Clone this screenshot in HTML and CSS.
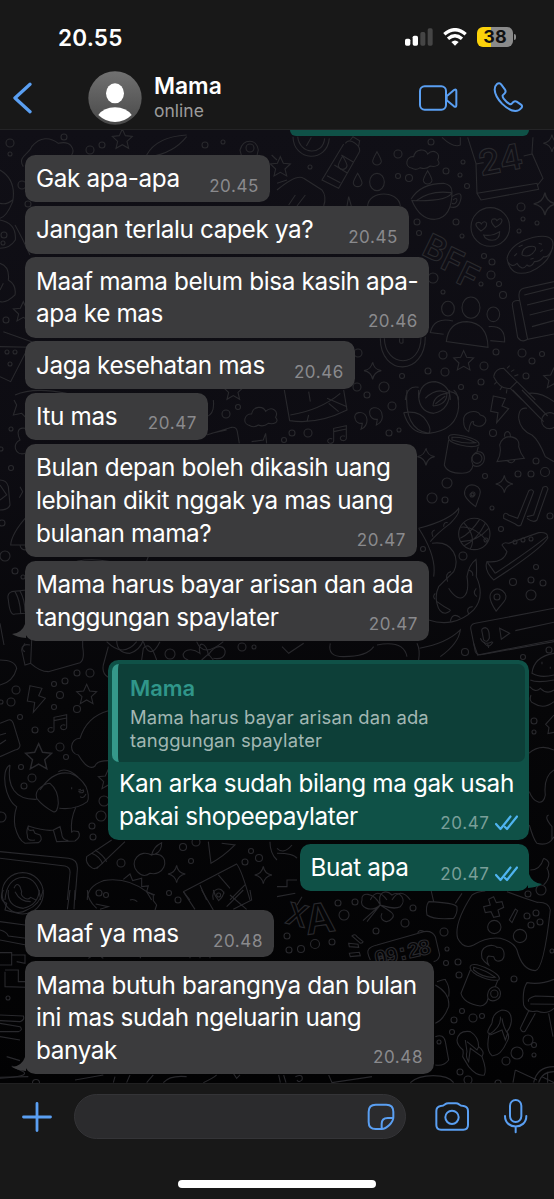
FILE: index.html
```
<!DOCTYPE html>
<html lang="id">
<head>
  <meta charset="UTF-8">
  <title>Mama</title>
  <link rel="stylesheet" href="styles.css">
</head>
<body>

<!-- status bar + header -->
<header class="header">
  <div class="status">
    <span class="clock">20.55</span>
    <div class="status-icons">
      <svg class="signal" width="28" height="18" viewBox="384 83 84 54">
        <rect x="384" y="115" width="16" height="21" rx="5" fill="#fff"/>
        <rect x="407" y="106" width="16" height="30" rx="5" fill="#fff"/>
        <rect x="430" y="95" width="15" height="41" rx="5" fill="#454545"/>
        <rect x="452" y="84" width="15" height="52" rx="5" fill="#454545"/>
      </svg>
      <svg class="wifi" width="24" height="18" viewBox="499 83 72 54">
        <path d="M503 102Q535 74 567 102" fill="none" stroke="#fff" stroke-width="10"/>
        <path d="M514 115Q535 97 556 115" fill="none" stroke="#fff" stroke-width="10"/>
        <path d="M524 125Q535 116 546 125L535 136Z" fill="#fff"/>
      </svg>
      <div class="battery"><span>38</span></div>
    </div>
  </div>
  <div class="contact">
    <svg class="back" width="19" height="32" viewBox="37 245 58 96">
      <path d="M89 251L43 293L89 335" fill="none" stroke="#5a9ff2" stroke-width="10" stroke-linecap="round" stroke-linejoin="round"/>
    </svg>
    <svg class="avatar" width="54" height="54" viewBox="265 211 162 162">
      <defs>
        <linearGradient id="av" x1="0" y1="0" x2="0" y2="1">
          <stop offset="0" stop-color="#717171"/>
          <stop offset="1" stop-color="#494949"/>
        </linearGradient>
      </defs>
      <circle cx="346" cy="292" r="80" fill="url(#av)"/>
      <ellipse cx="346" cy="278" rx="27" ry="30" fill="#fff"/>
      <path d="M296 343Q313 320 346 320Q379 320 396 343Q374 364 346 364Q318 364 296 343Z" fill="#fff"/>
    </svg>
    <div class="who">
      <div class="name">Mama</div>
      <div class="presence">online</div>
    </div>
    <svg class="video" width="39" height="26" viewBox="428 251 117 78" fill="none" stroke="#5a9ff2" stroke-width="6" stroke-linejoin="round">
      <rect x="431" y="255" width="78" height="70" rx="14"/>
      <path d="M511 285L533 266Q540 262 540 269V312Q540 319 533 315L511 297Z"/>
    </svg>
    <svg class="phone" width="31" height="31" viewBox="652 247 93 93" fill="none" stroke="#5a9ff2" stroke-width="6" stroke-linejoin="round">
      <path d="M664 253Q671 247 677 255L688 270Q692 276 687 281L681 287Q680 291 684 297Q692 308 702 313Q706 315 709 311L713 307Q718 303 723 306L736 315Q742 319 737 325Q730 334 719 334Q700 333 679 312Q658 290 657 270Q657 259 664 253Z"/>
    </svg>
  </div>
</header>

<main class="chat">
  <!-- doodle wallpaper -->
  <svg class="wallpaper" viewBox="0 130 554 953">
    <defs>
      <path id="star" d="M0-30L9-10L30-8L14 7L19 28L0 17L-19 28L-14 7L-30-8L-9-10Z"/>
      <path id="spark" d="M0-26Q3-4 26 0Q4 4 0 26Q-4 4-26 0Q-4-4 0-26Z"/>
      <path id="drop" d="M0-20Q14 4 13 10Q10 20 0 20Q-10 20-13 10Q-14 4 0-20Z"/>
      <path id="bolt" d="M-18-38L18-30L8-8L28 0L-8 42L-4 12L-26 8Z"/>
      <path id="cloud" d="M-35 25C-60 20-52-12-30-10C-25-35 5-35 12-18C30-35 52-20 42 0C55 15 35 22 20 18Q5 30-10 23Q-22 32-35 25Z"/>
      <path id="pin" d="M8 38Q-30 10-25-8Q-18-32 5-26Q28-18 20 4Q14 20 8 38Z"/>
      <path id="note" d="M-16 18V-20L22-28V10M-16-10L22-18M-16 18A9 7 0 1 1-20 12M22 10A9 7 0 1 1 18 4"/>
    </defs>

    <g transform="translate(0 140) scale(.3333)">
      <path d="M70 80C50 50 90 40 95 20C120-10 150-10 175 10C215 0 225 30 215 45M440 45Q470-10 560-15M450 50Q520 40 560-10M0 90Q50 120 38 185Q20 230 0 235M0 190Q20 195 38 180M0 240Q50 250 46 300Q30 325 0 325M45 255Q65 290 90 345M0 370Q30 380 25 420Q50 435 45 465Q20 490 0 485M10 430L0 450"/>
      <path d="M10 575L95 605M0 620L90 622M78 635L32 725L0 710M45 765Q100 740 200 760M720 30C730-5 770-5 775 30Q770 60 752 90Q725 60 720 30M815 45L831 60"/>
      <use href="#star" x="367" y="-3"/><use href="#star" x="70" y="515"/><use href="#star" x="700" y="750"/>
    </g>

    <g transform="translate(277 130) scale(.3333)">
      <path d="M48 20C50 95 150 100 157 25M62 20C68 75 138 78 143 25M103 22L88 48"/>
      <path d="M205 40Q215 25 235 40Q255 55 245 70L185 175L135 150L200 42M193 75L230 97M172 105L212 130M150 137L190 158M220 30L228 20L248 32L245 48"/>
      <path d="M572 22L597 100L600 190L612 210L785 178L780 160L600 190M768 22L765 70L798 145L782 165M597 102L620 98M740 78L765 72"/>
      <path d="M402 208Q430 160 500 160Q525 165 525 185Q520 215 405 212Q430 270 475 268Q525 262 525 185M525 200Q555 180 552 205Q545 240 518 230M418 212Q460 180 522 188M528 210Q540 200 540 212Q535 225 525 220"/>
      <circle cx="640" cy="291" r="58"/>
      <path d="M612 303Q590 285 600 278Q610 275 613 282Q622 270 629 280Q630 293 612 303ZM655 292Q638 275 646 268Q656 264 660 272Q670 262 675 270Q676 282 655 292ZM620 315Q645 320 668 305Q668 330 645 331Q625 330 620 315Z"/>
      <path d="M690 385Q700 340 770 322Q830 310 828 345Q820 400 760 425Q700 445 690 385M692 395Q705 415 720 400Q735 425 750 405Q762 415 772 395Q790 395 800 380Q815 385 828 352M735 375Q735 355 755 350Q780 345 775 360Q760 385 735 375M720 370l-8 8M725 350l12-5M785 340l10 3M790 365l8-6M760 388l10-3"/>
      <path d="M831 455L740 475Q722 480 727 505L752 628L831 612M727 512Q705 510 706 525L722 622Q735 640 752 628M742 495L831 473M750 525L831 505M758 555L831 537M765 590L831 572"/>
      <ellipse cx="513" cy="536" rx="19" ry="22"/><ellipse cx="582" cy="533" rx="27" ry="32"/><ellipse cx="649" cy="553" rx="19" ry="22"/>
      <path d="M508 635Q515 575 570 575Q632 580 633 652ZM528 573Q470 560 460 608L500 613M635 590Q685 585 683 636L640 632"/>
      <path d="M310 625C310 740 445 740 445 620M322 625C325 715 432 715 432 622M368 625Q365 645 378 638V625"/>
      <path d="M0 180Q60 130 80 145L135 180Q150 200 140 228M0 160L30 150M35 225L55 195M60 228L85 195M272 228C275 180 365 180 370 228M210 228L215 200L223 228M495 22Q530 55 550 45V22"/>
      <path d="M650 740Q655 715 680 715L720 755L700 775Q670 780 650 740M720 755L775 810M700 775L735 810M660 755l-8 8M675 770l-6 10M690 778l-2 12M690 715l8-8M702 725l10-6M712 738l12-4"/>
      <path d="M385 810Q390 765 425 772M425 805Q430 755 475 755Q520 765 520 810M520 785Q545 790 545 810M445 805Q480 770 515 790"/>
      <use href="#star" x="10" y="110"/><use href="#star" x="560" y="692"/><use href="#star" x="830" y="745"/>
      <use href="#spark" x="803" y="222" transform="translate(-240 -67) scale(1.3)"/><use href="#spark" x="287" y="722"/><use href="#spark" x="825" y="40"/>
      <use href="#drop" x="300" y="85"/><use href="#drop" x="242" y="150"/><use href="#drop" x="452" y="142" /><use href="#drop" x="197" y="98"/>
      <ellipse cx="300" cy="156" rx="22" ry="26"/>
      <use href="#cloud" x="440" y="90"/>
      <g class="letters">
        <text x="612" y="138" font-size="105" transform="rotate(-11 612 138)">24</text>
        <text x="430" y="372" font-size="100" transform="rotate(26 430 372)">B</text>
        <text x="485" y="412" font-size="100" transform="rotate(26 485 412)">F</text>
        <text x="532" y="455" font-size="100" transform="rotate(26 532 455)">F</text>
      </g>
    </g>

    <g transform="translate(277 390) scale(.3333)">
      <path d="M22 0L38 92Q120 105 210 60L200 0M40 75Q130 60 190 10M95 5l5 30M95 75l-5 20M155 40L185 65M150 25L210 50"/>
      <path d="M235 88C225 65 260 60 268 80C275 100 262 115 252 118Q255 108 256 100Q240 102 235 88M279 75C270 50 305 45 314 68C320 88 310 100 298 105Q300 95 301 88Q285 90 279 75"/>
      <path d="M390 0Q380 120 455 130Q540 120 545 50Q545 10 530 0M380 68Q430 60 450 95Q465 120 455 130Q400 135 380 68M425 0Q420 65 470 70Q520 60 518 0M468 48Q470 15 510 10Q510 45 468 48M475 42L505 18"/>
      <path d="M560 95C555 65 600 55 610 75C640 80 625 115 600 108Q585 105 590 95Q580 90 575 125Q560 115 560 95"/>
      <path d="M707 0L800 95M735 0L812 78M725 85Q725 50 750 55M725 85Q730 120 765 135Q785 150 805 200L831 215M755 10Q790 5 831 35"/><circle cx="818" cy="92" r="24"/>
      <path d="M660 215Q675 190 668 165Q675 140 700 140Q730 145 725 170Q730 190 742 205ZM683 140C680 120 702 120 700 140M692 213Q705 225 714 210"/>
      <path d="M515 140Q520 128 560 138Q610 150 606 165Q590 175 550 165Q510 155 515 140M515 150L502 225Q510 250 555 250Q585 250 588 225M604 170L600 185M588 225C570 190 615 170 622 200C625 225 600 235 588 225"/><circle cx="600" cy="205" r="15"/>
      <path d="M525 142Q560 140 596 158Q560 162 525 150Z"/>
      <path d="M680 375Q685 365 695 375L722 385L755 303Q765 295 770 305L732 405Q725 412 715 402L680 385ZM750 380L770 375L798 292Q810 285 813 297L780 390Q770 400 750 385"/>
      <circle cx="592" cy="432" r="47"/>
      <path d="M550 412Q590 405 632 455M560 398Q600 440 580 477M608 388Q580 430 550 445M625 400Q600 450 560 468M552 455Q600 455 635 415"/>
      <path d="M675 465Q680 455 695 460L785 428Q815 425 812 445Q790 480 650 570Q620 540 630 515Q680 520 690 485ZM632 518L655 550M655 550Q760 480 810 440"/>
      <path d="M425 415Q520 390 545 355Q550 370 520 400Q480 430 460 455M425 415Q480 500 470 560M465 460C530 450 550 510 530 545Q505 570 485 590C470 620 480 670 505 670Q520 665 520 660M515 595C550 650 580 620 570 560Q575 525 597 508Q600 530 598 560Q625 620 590 660C550 700 500 705 455 690M480 635Q500 650 520 660"/>
      <path d="M468 440q-8-15 5-20M500 410q0-15 12-12M512 575q-10-25 10-30M575 540q15 5 12 18M600 620q-15-10-2-25M575 672q-10-20 12-22M520 695q5-30 30-12M475 610q-10 10 0 18"/>
      <path d="M831 655L595 700Q578 703 582 720L595 785Q600 797 620 793L831 755M668 715L698 730L673 748ZM715 722L831 697M615 725Q612 715 625 713Q638 715 637 745Q630 760 620 750ZM610 745Q620 768 645 755M632 762l3 12"/>
      <path d="M428 775Q510 760 550 720Q545 760 490 800M420 760Q430 780 425 810M160 760Q150 800 200 800Q270 800 290 770M300 765Q380 750 390 800M15 770L35 790L80 760"/>
      <use href="#bolt" x="667" y="56"/><use href="#note" x="186" y="135"/>
      <use href="#spark" x="447" y="200"/><use href="#spark" x="682" y="282"/>
      <use href="#pin" x="588" y="312" /><use href="#pin" x="663" y="625" transform="rotate(20 663 625)"/>
    </g>

    <g transform="translate(0 400) scale(.3333)">
      <path d="M42 0L50 15L40 45L65 40L80 55M75 85C45 80 55 110 60 120C35 130 45 170 75 160M0 240Q20 240 25 260L30 315Q25 330 0 330M0 255L20 285L0 300M60 260l8 15l-10 18M80 350Q35 400 32 435Q50 435 78 435M60 437q5 15 18 12M80 570L35 575Q20 580 25 600Q30 650 45 642L80 640M45 575Q60 600 62 640M60 573Q75 600 75 635M0 670L12 735"/>
      <path d="M640 0Q645 40 620 50M620 105L695 82Q710 80 712 95L718 130M635 100L680 90M755 125L790 120L797 100L800 130M200 495Q250 470 330 485M440 483L445 470M75 730q-15 20 0 25M320 725q50 50 90 0M430 725q20 60 50 0M590 725q20 50 80 0"/>
      <use href="#cloud" x="785" y="52"/>
    </g>

    <g transform="translate(0 640) scale(.3333)">
      <path d="M95 0L92 70Q120 95 145 95L240 68Q255 60 248 20V0M90 15Q65 10 65 30L75 75L92 70M0 60Q45 60 50 85Q40 125 0 135M325 20L310 75Q305 100 325 112M425 60L430 25Q450 0 470 60M350 0Q350 40 390 40Q420 30 430 0"/>
      <path d="M565 60C530 50 560 10 600 40C590 0 620 5 625 45C650 5 680 20 675 40Q670 60 640 55M605 60L625 42L640 60"/>
      <path d="M0 250L25 240Q35 237 40 250L60 315Q60 328 45 330L0 350M0 285L18 280M0 312L18 300"/>
      <path d="M325 212Q260 230 240 295C210 295 205 340 235 345Q265 395 285 378Q290 362 325 362"/>
      <path d="M30 375C0 390 15 480 50 500Q40 530 45 560Q55 600 75 610L115 608Q130 600 120 585L105 580L100 570Q80 575 85 558Q140 575 160 570L170 605L225 603Q245 590 235 575Q215 570 215 578Q210 540 228 500M30 375C20 440 45 480 110 478M110 475C100 445 140 430 150 430Q175 450 175 490Q172 520 160 515Q130 500 110 475M120 450Q160 390 210 400Q240 410 258 440Q270 470 262 485Q230 510 178 505M175 395Q200 380 235 412M85 558Q78 575 82 585Q80 605 105 600M160 570L180 560L185 580Q185 600 205 602"/>
      <path d="M235 455l15-5q5 10-12 8M240 470q10 8 18-8M235 450l8-2M215 442v6"/>
      <path d="M0 635L205 655Q235 658 232 690L225 780M0 655L195 678Q212 682 210 700L202 780"/>
      <circle cx="68" cy="760" r="62"/><path d="M15 780Q20 715 70 712Q115 715 122 780M42 745Q50 725 60 740L65 755Q60 765 75 775Q85 780 92 772L108 780"/>
      <path d="M260 650L335 600M290 686L375 605M260 650Q255 670 275 683Q285 690 295 680M275 640Q300 650 308 672M285 630Q310 645 320 665"/>
      <path d="M455 645C420 625 385 665 412 695Q430 715 450 700C490 710 510 660 480 645Q465 640 455 645Q460 620 485 608Q485 635 465 642"/>
      <path d="M262 780Q260 740 310 722Q380 710 440 755L455 780M370 718L390 702L398 722L425 715V740L445 738L440 755L465 765"/>
      <path d="M625 605L633 670Q670 650 705 615L665 610M550 755L710 672Q725 690 750 780M550 755L570 780M600 735L620 780M655 705L690 745M735 735L690 780M810 605Q810 640 831 660"/>
      <path d="M640 780C630 740 670 740 672 762"/><circle cx="656" cy="765" r="6"/>
      <use href="#bolt" x="108" y="175"/><use href="#star" x="260" y="163"/><use href="#star" x="116" y="350" transform="translate(-35 -105) scale(1.3)"/>
      <use href="#note" x="178" y="252"/><use href="#star" x="325" y="418"/>
      <use href="#spark" x="530" y="702"/><use href="#spark" x="790" y="705"/>
    </g>

    <g transform="translate(277 640) scale(.3333)">
      <path d="M590 10L602 45L831 0M620 5q15 25 28 0"/>
      <path d="M831 40Q770 50 765 100Q790 115 831 105M760 120Q780 130 831 120M758 140Q775 160 790 145Q810 165 831 150M762 165Q755 185 770 190Q800 210 831 185M795 65v8M820 80v6"/>
      <path d="M755 340Q790 310 831 330M757 455C770 490 800 500 805 465C800 420 815 400 831 390M815 525Q800 530 825 560V600M757 555Q770 600 780 610Q815 620 831 590M800 655Q790 690 760 690M800 655Q825 665 810 685Q825 710 800 735M831 225l-25 28l10 10l-3 18l18-4"/>
      <path d="M0 640Q50 640 60 655M0 625q20 20 45-10M0 740h30v-20h30M280 780Q300 740 330 780M345 780Q370 740 400 780"/>
    </g>

    <g transform="translate(0 890) scale(.3333)">
      <path d="M10 0Q-5 30 20 40L15 60Q60 75 80 60Q120 45 130 0M25 0Q20 50 70 55Q115 45 118 0M45 5Q60 35 92 35M210 0L202 58M225 0L222 58"/>
      <path d="M0 95L75 105M0 120Q20 125 25 138L78 145M0 150L78 165M0 188H35V225H0M35 195H75V220L50 215M15 245V290L75 292M15 240H55V275H75M0 375L70 378Q75 390 60 395L0 392M0 400L60 410Q70 420 55 425L0 425M0 440L60 450M20 500L60 512M35 528L70 545Q90 560 0 565"/>
      <path d="M262 0Q262 30 290 55M287 42L325 50L300 58M390 30Q400 25 412 35M440 5L460 15V32L470 45L465 60M550 5L585 58M605 0L640 60M750 0L755 30L700 58M640 0Q645 20 656 32Q670 20 672 5M690 15L740 58M680 50L730 0"/>
      <path d="M265 205q25-20 45 0M420 205l5-10M570 205v-20M600 205v-20M630 205v-20"/>
      <path d="M0 562L85 560M225 570L310 555M340 578L345 560M380 578L390 555M440 578L460 555M490 578Q510 555 560 560M610 578Q640 565 650 555M700 550l10 15l10-10"/>
    </g>

    <g transform="translate(277 890) scale(.3333)">
      <path d="M0 20L55 10M60 45L75 20"/>
      <path d="M310 45C280 70 245 50 255 30C250 5 290 5 310 45C300 0 330 0 345 15C370 0 390 30 370 50C350 60 330 50 310 45C330 60 360 70 345 85C330 105 305 90 315 70M310 45L258 92M310 45L270 95"/>
      <path d="M455 35Q445 50 450 75Q470 90 530 85Q542 70 540 50Q530 38 455 35M462 0L470 35M555 10L535 40"/>
      <path d="M585 15Q600 5 625 3M585 15Q530 100 542 145Q560 180 590 165Q630 140 670 145Q710 155 720 180Q735 240 775 242Q800 240 820 60Q815 35 780 37Q730 20 690 5M635 28L650 20L658 38L675 35L680 52L663 60L668 78L650 82L642 65L625 68L620 50L640 45Z"/>
      <path d="M697 90L715 57L722 62L705 98Z"/><circle cx="652" cy="111" r="20"/><circle cx="729" cy="138" r="20"/>
      <path d="M225 138Q235 130 240 140L258 155Q255 162 248 158ZM215 160L243 163L245 172L217 170ZM217 190L247 187L250 197L220 200Z"/>
      <path d="M280 210Q268 185 275 178Q280 170 300 165L440 125Q465 120 475 140L488 195Q485 212 470 215M422 130Q425 118 440 124"/>
      <path d="M615 205C605 165 650 160 660 172C685 170 685 200 675 210Q655 220 650 200L635 198Q625 205 635 225Q620 215 615 205"/>
      <path d="M580 228Q590 215 640 240Q675 260 665 270Q640 275 600 255Q575 240 580 228M580 240L552 310Q560 340 610 348Q630 345 633 325M662 272L655 290M633 325C625 295 660 275 670 305C675 330 645 340 633 325M590 232Q625 240 655 262Q620 265 590 240Z"/><circle cx="652" cy="311" r="11"/>
      <path d="M831 268Q790 285 750 278Q735 300 740 345Q750 370 780 363Q810 375 831 355M755 335Q750 325 775 318L831 320M760 342L831 343M755 363L730 415Q735 430 745 423L775 370M815 370L828 440"/>
      <path d="M540 450Q545 420 580 425Q605 440 605 470Q625 485 615 500Q630 540 622 555Q600 560 575 530L557 500Q560 490 558 480Q540 465 540 450M565 450L570 485Q565 500 575 515L580 475L615 500M570 455L600 480L605 470"/>
      <path d="M645 400Q645 370 675 360Q705 360 703 395Q700 415 690 425Q700 440 690 455Q670 500 645 497Q625 480 637 430Q625 430 645 400M670 380Q675 410 635 435M675 385Q680 415 692 430L685 450L675 420L640 435"/>
      <path d="M475 285Q520 310 515 350Q500 390 475 400M480 275Q510 265 505 270Q520 290 515 320M475 440Q500 430 505 455L515 510Q500 530 475 525M400 578C430 550 510 550 530 578M715 540L780 570M715 540L708 578M770 578Q780 530 831 530M785 578Q795 545 831 545M812 545V578M795 560L831 578M5 555L10 578M20 555L27 578M55 560q25-10 20 10q-10 10-15 0M155 555L165 578L285 560"/>
      <g class="letters">
        <text x="22" y="98" font-size="90" transform="rotate(14 22 98)">X</text>
        <text x="90" y="134" font-size="122" transform="rotate(-8 90 134)">A</text>
        <text class="digits" x="297" y="228" font-size="66" transform="rotate(-13 297 228)">09:28</text>
      </g>
    </g>

    <g id="dots"></g>
  </svg>

  <div class="peek"></div>

  <div class="msg in w245 first"><p>Gak apa-apa</p><time>20.45</time></div>
  <div class="msg in w384"><p>Jangan terlalu capek ya?</p><time>20.45</time></div>
  <div class="msg in w404"><p>Maaf mama belum bisa kasih apa-<br>apa ke mas</p><time>20.46</time></div>
  <div class="msg in w330"><p>Jaga kesehatan mas</p><time>20.46</time></div>
  <div class="msg in w183"><p>Itu mas</p><time>20.47</time></div>
  <div class="msg in w392"><p>Bulan depan boleh dikasih uang<br>lebihan dikit nggak ya mas uang<br>bulanan mama?</p><time>20.47</time></div>
  <div class="msg in w404 last"><p>Mama harus bayar arisan dan ada<br>tanggungan spaylater</p><time>20.47</time>
    <svg class="tail" width="26" height="24" viewBox="0 0 26 24"><path d="M13 0V6Q10 15 0 16Q6 20 16 20L26 24V0Z"/></svg>
  </div>

  <div class="msg out w420">
    <blockquote class="quote">
      <strong>Mama</strong>
      <span>Mama harus bayar arisan dan ada<br>tanggungan spaylater</span>
    </blockquote>
    <p>Kan arka sudah bilang ma gak usah<br>pakai shopeepaylater</p>
    <time>20.47 <svg class="ticks" width="23" height="16" viewBox="0 0 23 16"><path d="M1 9L5.5 14L15.5 1.5M10 12L12 14L22 1.5"/></svg></time>
  </div>
  <div class="msg out w229 last"><p>Buat apa</p>
    <time>20.47 <svg class="ticks" width="23" height="16" viewBox="0 0 23 16"><path d="M1 9L5.5 14L15.5 1.5M10 12L12 14L22 1.5"/></svg></time>
    <svg class="tail" width="26" height="24" viewBox="0 0 26 24"><path d="M13 0V6Q10 15 0 16Q6 20 16 20L26 24V0Z"/></svg>
  </div>

  <div class="msg in w249"><p>Maaf ya mas</p><time>20.48</time></div>
  <div class="msg in w409 last"><p>Mama butuh barangnya dan bulan<br>ini mas sudah ngeluarin uang<br>banyak</p><time>20.48</time>
    <svg class="tail" width="26" height="24" viewBox="0 0 26 24"><path d="M13 0V6Q10 15 0 16Q6 20 16 20L26 24V0Z"/></svg>
  </div>
</main>

<footer class="footer">
  <div class="composer">
    <svg class="plus" width="30" height="30" viewBox="0 0 30 30" fill="none" stroke="#5a9ff2" stroke-width="2.8" stroke-linecap="round">
      <path d="M15 1.5V28.5M1.5 15H28.5"/>
    </svg>
    <div class="field">
      <svg width="28" height="28" viewBox="271 82 84 84" fill="none" stroke="#5a9ff2" stroke-width="6" stroke-linejoin="round">
        <path d="M350 125V108Q350 87 329 87H297Q276 87 276 108V139Q276 160 297 160H315C330 160 350 140 350 125ZM315 160V145Q315 127 333 127H350"/>
      </svg>
    </div>
    <svg class="camera" width="34" height="30" viewBox="474 78 102 90" fill="none" stroke="#5a9ff2" stroke-width="6" stroke-linejoin="round">
      <path d="M478 105Q478 92 491 90Q499 90 504 85Q508 82 514 82H537Q542 82 546 85Q551 90 560 90Q573 92 573 105V147Q573 161 559 161H492Q478 161 478 147Z"/>
      <circle cx="525" cy="124" r="20"/>
    </svg>
    <svg class="mic" width="25" height="35" viewBox="678 72 75 105" fill="none" stroke="#5a9ff2" stroke-width="6" stroke-linecap="round">
      <rect x="699" y="75" width="34" height="66" rx="17"/>
      <path d="M684 123C684 165 748 165 748 123M716 155V172"/>
    </svg>
  </div>
  <div class="home-bar"></div>
</footer>

<script>
  // small circles scattered between the doodles: [x, y, r]
  const dots = [
    [10,143,4],[64,137,3],[90,150,4],[102,145,3],[205,145,3],[223,142,2],[10,154,2],[28,204,3],[22,185,4],[6,320,3],[250,148,4],[4,235,3],[3,243,2],[7,352,2],[15,352,2],[10,364,2],
    [310,167,2],[398,154,4],[431,142,3],[398,176,2.5],[409,178,3.5],[446,171,3],[463,162,2],[460,175,2],[467,186,2.5],[521,207,4],[523,219,2],[537,223,2],[519,231,2],
    [417,222,3],[419,233,2.5],[456,222,3],[462,236,2],[484,256,2.5],[492,262,3],[491,275,4],[481,284,2],[499,284,2.5],[433,278,5],[443,292,2],[503,295,3.5],[443,355,4],
    [496,352,3],[484,366,4],[522,353,4],[532,361,3],[542,354,2.5],[526,376,3],[428,371,3],[445,372,4],[402,376,2.5],[481,382,3],[461,387,2.5],[358,353,4],[357,387,4],[367,395,3],[384,387,5],[475,397,2.5],
    [292,433,3],[308,433,4],[284,440,2.5],[392,406,4],[389,433,3],[399,430,2],[493,433,3.5],[536,461,3],[518,474,3],[531,474,3],[545,472,4.5],[485,476,2.5],[447,483,5],[432,498,5],[445,500,3],
    [492,508,2],[501,529,2.5],[463,556,4],[550,516,3],[536,567,2.5],[531,580,3],[543,583,3],[513,582,3.5],[531,595,5],[465,652,3.5],[523,657,2.5],[423,549,2.5],[473,494,2],[497,597,3],
    [11,429,2],[1,449,2],[11,468,2.5],[5,556,5],[2,523,3],[15,571,3],[23,577,2],[226,414,4],[238,407,2.5],
    [170,654,5],[242,647,4],[254,647,2],[77,673,3],[90,673,4],[65,681,3],[54,684,2.5],[60,695,3.5],[16,690,4],[11,702,4],[1,702,2],[54,707,2.5],[77,709,3.5],[20,717,2.5],[35,730,3],[60,747,4],[66,757,2.5],[21,767,2.5],[32,778,4],[24,786,3],[1,817,5],[101,816,5],[104,801,5],[92,826,3],[93,837,3],[183,847,3.5],[121,863,4],[191,861,2.5],[251,851,2.5],[259,858,3.5],[245,862,3],[99,893,3],[106,895,2.5],[169,893,2.5],[178,900,3],[196,842,4],
    [534,721,3],[534,732,2],[541,890,5],[528,894,3],[549,650,3],[528,1040,5],[534,1045,2.5],[506,1061,4],[517,1053,6],[460,1072,3],[468,1080,4],[498,1083,3],
    [338,903,3],[355,902,3],[344,915,5],[413,908,3],[376,931,3],[405,923,4],[444,932,4],[287,936,3],[289,950,3],[301,949,3.5],[315,944,4.5],[332,942,3],[447,949,2],[446,963,2.5],[458,962,3],[459,975,3],[514,979,3],[462,1011,2.5],[454,1020,3],[473,1018,4],[482,1016,2.5],[452,1032,2.5],[439,1042,2],[534,1055,2],[552,951,2],
    [527,916,3],[536,913,3],[531,925,3],[540,922,3],[8,998,2],[36,1083,3.5],
    [472,495,2],[486,540,2],[515,542,2],[523,540,2],[531,539,2]
  ];
  document.getElementById("dots").innerHTML =
    dots.map(([x, y, r]) => `<circle cx="${x}" cy="${y}" r="${r}"/>`).join("");
</script>
</body>
</html>
```
FILE: styles.css
```
* { box-sizing: border-box; }
body {
  margin: 0;
  width: 554px;
  height: 1199px;
  overflow: hidden;
  display: flex;
  flex-direction: column;
  background: #181818;
  color: #fff;
  font-family: Inter, "Liberation Sans", sans-serif;
}
svg { display: block; flex: none; }
p, blockquote { margin: 0; }

/* header */
.header {
  height: 130px;
  flex: none;
  background: #181818;
  border-bottom: 1px solid #242426;
}
.status {
  display: flex;
  justify-content: space-between;
  align-items: center;
  height: 70px;
  padding: 4px 38px 0 58px;
}
.clock { font-size: 22.5px; font-weight: 600; letter-spacing: 0.2px; }
.status-icons { display: flex; align-items: center; }
.wifi { margin: 0 10px; }
.battery {
  position: relative;
  width: 36px;
  height: 20px;
  margin-right: 3px;
  border-radius: 6px;
  background: linear-gradient(90deg, #fbd20a 14px, #8b8b8b 14px);
  color: #111;
  font-size: 18px;
  font-weight: 700;
  line-height: 20px;
  text-align: center;
}
.battery::after {
  content: "";
  position: absolute;
  right: -3px;
  top: 7px;
  width: 2px;
  height: 6px;
  border-radius: 0 2px 2px 0;
  background: #8b8b8b;
}
.contact {
  display: flex;
  align-items: center;
  height: 55px;
  padding: 0 30px 0 13px;
}
.avatar { margin: 0 12px 0 56px; }
.who { flex: 1; }
.name { font-size: 22.8px; font-weight: 600; line-height: 26px; }
.presence { font-size: 17.5px; line-height: 23px; color: #9b9b9b; }
.phone { margin-left: 35px; }

/* chat */
.chat {
  position: relative;
  height: 953px;
  flex: none;
  display: flex;
  flex-direction: column;
  align-items: flex-start;
  gap: 3.8px;
  padding: 0 25.5px 0 25px;
  overflow: hidden;
  background: linear-gradient(#100f16, #0d0c12 35%, #060608 60%, #020203);
}
.wallpaper {
  position: absolute;
  inset: 0;
  width: 554px;
  height: 953px;
  fill: none;
  stroke: #29292d;
  stroke-width: 1.1;
}
.wallpaper > g[transform] { stroke-width: 3.3; }
.letters { font-family: Inter, sans-serif; font-weight: 600; }
.digits { font-family: "Liberation Mono", monospace; letter-spacing: -6px; }
.peek {
  position: relative;
  align-self: flex-end;
  width: 239px;
  height: 6px;
  flex: none;
  border-radius: 0 0 12px 12px;
  background: #0f5147;
}

.msg {
  position: relative;
  display: grid;
  grid-template-columns: minmax(0, 1fr);
  flex: none;
  padding: 7.3px 11px;
  border-radius: 10.5px;
  font-size: 24.3px;
  line-height: 32.8px;
  letter-spacing: -0.37px;
  white-space: nowrap;
}
.msg p { grid-area: 1 / 1; }
.msg time {
  grid-area: 1 / 1;
  place-self: end;
  display: flex;
  align-items: center;
  gap: 5px;
  margin-bottom: -1.5px;
  font-size: 17px;
  line-height: 22px;
  letter-spacing: 0.6px;
  color: #8a8a8d;
}
.in { background: #3b3b3d; }
.out { align-self: flex-end; background: #0f5147; }
.out time { color: #7a9f99; }
.first { margin-top: 15.2px; }
.last { margin-bottom: 15.1px; }

.w183 { width: 183px; }
.w229 { width: 229px; }
.w245 { width: 245px; }
.w249 { width: 249px; }
.w330 { width: 330px; }
.w384 { width: 384px; }
.w392 { width: 392px; }
.w404 { width: 404px; }
.w409 { width: 409px; }
.w420 { width: 420.5px; }

.tail { position: absolute; left: -13px; bottom: -1px; fill: #3b3b3d; clip-path: inset(0 12px 3px 0); }
.out .tail { left: auto; right: -13px; fill: #0f5147; transform: scaleX(-1); }
.ticks { fill: none; stroke: #4fb4f0; stroke-width: 2.2; stroke-linecap: round; stroke-linejoin: round; }

/* reply preview */
.quote {
  grid-area: 1 / 1;
  height: 98.5px;
  margin: -3.3px -7px 5px;
  padding: 11px 12px;
  border-left: 6.5px solid #35988a;
  border-radius: 7px;
  background: #0d3f38;
  font-size: 18.4px;
  line-height: 23px;
}
.quote strong { display: block; margin-bottom: 4px; font-size: 22px; font-weight: 600; line-height: 27px; letter-spacing: -0.1px; color: #30968a; }
.quote span { display: block; color: #a2b7b3; letter-spacing: 0.15px; }
.quote ~ p, .quote ~ time { grid-row: 2; }

/* footer */
.footer {
  height: 116px;
  flex: none;
  display: flex;
  flex-direction: column;
  align-items: center;
  justify-content: space-between;
  padding: 10px 0 11px;
  background: #181818;
  border-top: 1px solid #202021;
}
.composer {
  align-self: stretch;
  display: flex;
  align-items: center;
  padding: 0 26.5px 0 22px;
}
.field {
  display: flex;
  align-items: center;
  justify-content: flex-end;
  width: 332px;
  height: 45px;
  margin: 0 29px 0 22px;
  padding-right: 10px;
  border: 1px solid #343437;
  border-radius: 23px;
  background: #2b2b2d;
}
.mic { margin-left: auto; }
.home-bar { width: 198px; height: 8px; border-radius: 4px; background: #fff; }
```
